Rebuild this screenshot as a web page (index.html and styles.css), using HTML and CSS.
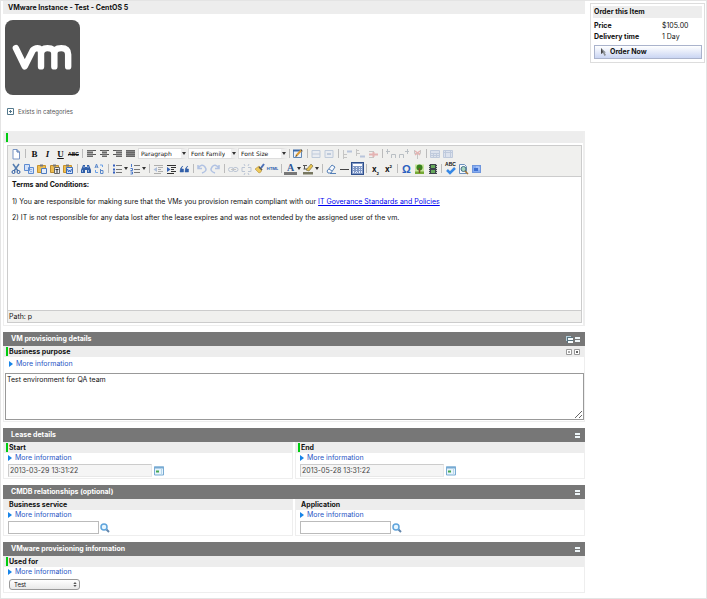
FILE: index.html
```html
<!DOCTYPE html>
<html lang="en">
<head>
<meta charset="utf-8">
<title>VMware Instance - Test - CentOS 5</title>
<link rel="stylesheet" href="styles.css">
</head>
<body>
<div class="page">
<main class="main">
  <h1 class="title">VMware Instance - Test - CentOS 5</h1>
  <svg class="logo" viewBox="0 0 76 76" role="img" aria-label="vm">
    <rect width="76" height="76" rx="8" fill="#525252"/>
    <path d="M11 28.500L20 47L28 31Q30 28.500 33 28.500Q36.500 28.500 36.500 34V47M36.500 34Q37 28.500 43 28.500Q50 28.500 50 34V47M50 34Q50 28.500 57 28.500Q64 28.500 64 35V47" fill="none" stroke="#fff" stroke-width="6.500" stroke-linecap="round" stroke-linejoin="round"/>
  </svg>
  <button class="categories" type="button">
    <svg viewBox="0 0 7 7"><path d="M.5.5h6v6h-6zM2 3.500h3M3.500 2v3" fill="none" stroke="#55798c"/></svg>
    Exists in categories
  </button>

  <section class="terms">
    <div class="label required"></div>
    <div class="editor">
      <div class="toolbar">
        <div class="tools">
          <button type="button" aria-label="New document"><svg viewBox="0 0 12 12"><path d="M3 1.500h4l2.500 2.500v7H3z" fill="#fff" stroke="#7895c4"/><path d="M7 1.500V4h2.500" fill="none" stroke="#4b70ad"/></svg></button>
          <i class="sep"></i>
          <button type="button" class="letter"><b>B</b></button>
          <button type="button" class="letter"><em>I</em></button>
          <button type="button" class="letter"><u>U</u></button>
          <button type="button" class="letter small"><s>ABC</s></button>
          <i class="sep"></i>
          <button type="button" aria-label="Align left"><svg viewBox="0 0 12 12"><path d="M2 2h9v1H2zM2 4h6v1H2zM2 6h9v1H2zM2 8h6v1H2z" fill="#555"/><path d="M2 2h6v7H2z" fill="#777" opacity=".6"/></svg></button>
          <button type="button" aria-label="Align center"><svg viewBox="0 0 12 12"><path d="M2 2h9v1H2zM4 4h5v1H4zM2 6h9v1H2zM4 8h5v1H4z" fill="#555"/><path d="M4 2h5v7H4z" fill="#777" opacity=".6"/></svg></button>
          <button type="button" aria-label="Align right"><svg viewBox="0 0 12 12"><path d="M2 2h9v1H2zM5 4h6v1H5zM2 6h9v1H2zM5 8h6v1H5z" fill="#555"/><path d="M5 2h6v7H5z" fill="#777" opacity=".6"/></svg></button>
          <button type="button" aria-label="Justify"><svg viewBox="0 0 12 12"><path d="M2 2h9v7H2z" fill="#888"/><path d="M2 2.500h9M2 4.500h9M2 6.500h9M2 8.500h9" stroke="#666"/></svg></button>
          <span class="drop"><select aria-label="Format"><option>Paragraph</option></select></span>
          <span class="drop"><select aria-label="Font family"><option>Font Family</option></select></span>
          <span class="drop"><select aria-label="Font size"><option>Font Size</option></select></span>
          <i class="sep"></i>
          <button type="button" aria-label="Edit style"><svg viewBox="0 0 12 12"><path d="M1.500 2.500h8v7h-8z" fill="#eaf1fb" stroke="#5f86b5"/><path d="M1 2.500h9" stroke="#3d6aa8" stroke-width="2"/><path d="M4 8l5.500-6" stroke="#d99a35" stroke-width="2"/><path d="M3.500 8.500l1.500-1M9 2l1.500 1" stroke="#444"/></svg></button>
          <i class="sep"></i>
          <button type="button" class="off" aria-label="Row properties"><svg viewBox="0 0 12 12"><path d="M2 2.500h8v7H2zM2 6h8" fill="#dde6f7" stroke="#6788b8"/></svg></button>
          <button type="button" class="off" aria-label="Cell properties"><svg viewBox="0 0 12 12"><path d="M2 2.500h8v7H2z" fill="#dde6f7" stroke="#6788b8"/><path d="M4 5h4v2H4z" fill="#6788b8"/></svg></button>
          <i class="sep"></i>
          <button type="button" class="off" aria-label="Insert row before"><svg viewBox="0 0 12 12"><path d="M2.500 2v9M2 6.500h4M2 9.500h4M6 3.500h5" fill="none" stroke="#777"/><path d="M6 3.500h5" stroke="#5577bb" stroke-width="2"/></svg></button>
          <button type="button" class="off" aria-label="Insert row after"><svg viewBox="0 0 12 12"><path d="M2.500 1v7M2 2.500h3M2 5.500h4M6 8.500h5" fill="none" stroke="#777"/><path d="M6 8.500h5" stroke="#5577bb" stroke-width="2"/></svg></button>
          <button type="button" class="off" aria-label="Delete row"><svg viewBox="0 0 12 12"><path d="M2 3.500h5M2 9.500h5" stroke="#777"/><path d="M2 6.500h9M6.500 4v5" stroke="#d04444" stroke-width="2"/></svg></button>
          <i class="sep"></i>
          <button type="button" class="off" aria-label="Insert column before"><svg viewBox="0 0 12 12"><path d="M2.500 1v5M1 3.500h4M6.500 10V6.500h4V10" fill="none" stroke="#567"/></svg></button>
          <button type="button" class="off" aria-label="Insert column after"><svg viewBox="0 0 12 12"><path d="M9.500 1v5M7 3.500h4M1.500 10V6.500h4V10" fill="none" stroke="#567"/></svg></button>
          <button type="button" class="off" aria-label="Delete column"><svg viewBox="0 0 12 12"><path d="M3.500 2v3.500h6V2M6.500 5v6" fill="none" stroke="#777"/><path d="M4 3l5 4M9 3L4 7" stroke="#d04444" stroke-width="1.500"/></svg></button>
          <i class="sep"></i>
          <button type="button" class="off" aria-label="Split cells"><svg viewBox="0 0 12 12"><path d="M1.500 2.500h9v7h-9z" fill="#b9cbec" stroke="#6685bd"/><path d="M1 5.500h9M1 7.500h9M4.500 5v5M7.500 5v5" stroke="#6685bd"/></svg></button>
          <button type="button" class="off" aria-label="Merge cells"><svg viewBox="0 0 12 12"><path d="M1.500 2.500h9v7h-9z" fill="#b9cbec" stroke="#6685bd"/><path d="M3.500 3v6M8.500 3v6M1 4.500h9" stroke="#6685bd"/></svg></button>
        </div>
        <div class="tools">
          <button type="button" aria-label="Cut"><svg viewBox="0 0 12 12"><path d="M3 1l5 7M9 1L4 8" stroke="#557eb0" stroke-width="1.500"/><circle cx="3.500" cy="9" r="1.500" fill="none" stroke="#2c5aa2"/><circle cx="8.500" cy="9" r="1.500" fill="none" stroke="#2c5aa2"/></svg></button>
          <button type="button" aria-label="Copy"><svg viewBox="0 0 12 12"><path d="M1.500 1.500h5v6h-5zM5.500 4.500h5v6h-5z" fill="#d3e1f8" stroke="#5d8bd0"/><path d="M7 6.500h2M7 8.500h2" stroke="#8fb0e2"/></svg></button>
          <button type="button" aria-label="Paste"><svg viewBox="0 0 12 12"><path d="M1.500 2.500h8v7h-8z" fill="#edbd50" stroke="#c7922c"/><path d="M4 1.500h3v2H4z" fill="#777"/><path d="M5.500 5.500h5v5h-5z" fill="#e3ecfb" stroke="#4f7cbe"/></svg></button>
          <button type="button" aria-label="Paste as plain text"><svg viewBox="0 0 12 12"><path d="M1.500 2.500h8v7h-8z" fill="#edbd50" stroke="#b9892f"/><path d="M4 1.500h3v2H4z" fill="#777"/><path d="M5.500 4.500h5v6h-5z" fill="#eee" stroke="#666"/><path d="M6.500 6.500h3M8 6v4" stroke="#333"/></svg></button>
          <button type="button" aria-label="Paste from Word"><svg viewBox="0 0 12 12"><path d="M1.500 2.500h8v7h-8z" fill="#edbd50" stroke="#c7922c"/><path d="M4 1.500h3v2H4z" fill="#777"/><path d="M4.500 4.500h6v6h-6z" fill="#dbe7fb" stroke="#3c6cb7"/><path d="M5.500 6l1 3 1-2 1 2 1-3" fill="none" stroke="#3366bb"/></svg></button>
          <i class="sep"></i>
          <button type="button" aria-label="Find"><svg viewBox="0 0 12 12"><path d="M3 2h2v2h2V2h2l2 5v3H7V7H5v3H1V7z" fill="#315fa8"/><path d="M2.500 7v2M8.500 7v2M4 3v2M8 3v2" stroke="#8db0e4"/></svg></button>
          <button type="button" aria-label="Replace"><svg viewBox="0 0 12 12"><path d="M2 5l1.500-4L5 5M2.500 4h2M7.500 6v4.500h2.500v-3H7.500" fill="none" stroke="#5987ca"/><path d="M7 2h2.500v2M2.500 7v2.500H5" fill="none" stroke="#6ba0e6"/></svg></button>
          <i class="sep"></i>
          <button type="button" aria-label="Bulleted list"><svg viewBox="0 0 12 12"><path d="M5 2.500h6M5 6.500h6M5 9.500h6" stroke="#777"/><path d="M2 2.500h2M2 6.500h2M2 9.500h2" stroke="#335fc0" stroke-width="2"/></svg></button><button type="button" class="arrow" aria-label="Bullet styles"></button>
          <button type="button" aria-label="Numbered list"><svg viewBox="0 0 12 12"><path d="M5 2.500h6M5 6.500h6M5 9.500h6" stroke="#777"/><path d="M2.500 1v3M1.500 5.500h2v2h-2M1.500 9h2v2h-2" fill="none" stroke="#4b78c8"/></svg></button><button type="button" class="arrow" aria-label="Number styles"></button>
          <i class="sep"></i>
          <button type="button" class="off" aria-label="Outdent"><svg viewBox="0 0 12 12"><path d="M2 2.500h9M6 4.500h5M6 6.500h3M6 8.500h5M2 10.500h7" stroke="#333"/><path d="M5 4v5L1.500 6.500z" fill="#3765b8"/></svg></button>
          <button type="button" aria-label="Indent"><svg viewBox="0 0 12 12"><path d="M2 2.500h9M6 4.500h5M6 6.500h3M6 8.500h5M2 10.500h7" stroke="#333"/><path d="M2 4v5l3.500-2.500z" fill="#3765b8"/></svg></button>
          <button type="button" aria-label="Quote"><svg viewBox="0 0 12 12"><path d="M5 3Q2 4 2 9h3.500V6H3.500Q3.500 4 5 3M10 3Q7 4 7 9h3.500V6H8.500Q8.500 4 10 3" fill="#315fa8" stroke="#315fa8" stroke-width=".5"/></svg></button>
          <i class="sep"></i>
          <button type="button" class="off" aria-label="Undo"><svg viewBox="0 0 12 12"><path d="M2 5q4-5 7-1t-3 6M2 2v3.500h4" fill="none" stroke="#3d6fd0" stroke-width="1.500"/></svg></button>
          <button type="button" class="off" aria-label="Redo"><svg viewBox="0 0 12 12"><path d="M10 5Q6 0 3 4t3 6M10 2v3.500H6" fill="none" stroke="#3d6fd0" stroke-width="1.500"/></svg></button>
          <i class="sep"></i>
          <button type="button" class="off" aria-label="Link"><svg viewBox="0 0 12 12"><rect x="1.500" y="4.500" width="5" height="4" rx="2" fill="none" stroke="#5b76a6"/><rect x="6" y="4.500" width="5" height="4" rx="2" fill="none" stroke="#5b76a6"/><path d="M4 6.500h5" stroke="#777"/></svg></button>
          <button type="button" class="off" aria-label="Unlink"><svg viewBox="0 0 12 12"><path d="M5 4.500H2v4h3M8 4.500h3v4H8M4 1l1 2M9 1L8 3M4 12l1-2M9 12l-1-2" fill="none" stroke="#5b76a6"/></svg></button>
          <button type="button" aria-label="Clean up code"><svg viewBox="0 0 12 12"><path d="M2 6l4 4 2-1 1-3-3-3z" fill="#edc95a" stroke="#a9822c" stroke-width=".5"/><path d="M6 4l3 3" stroke="#555" stroke-width="1.500"/><path d="M8 5l3-4" stroke="#4b70b8" stroke-width="2"/></svg></button>
          <button type="button" class="code">HTML</button>
          <i class="sep"></i>
          <button type="button" class="colour">A</button><button type="button" class="arrow" aria-label="Text colours"></button>
          <button type="button" aria-label="Highlight"><svg viewBox="0 0 12 12"><path d="M1 2.500h4M2.500 2v4M1.500 6h4" stroke="#555"/><path d="M4 7l5-6 2 2-4 5z" fill="#e7c34e" stroke="#55512e" stroke-width=".5"/><path d="M1 9h10v2.500H1z" fill="#777760"/></svg></button><button type="button" class="arrow" aria-label="Highlight colours"></button>
          <i class="sep"></i>
          <button type="button" aria-label="Remove formatting"><svg viewBox="0 0 12 12"><path d="M2 8l5-6 3 2-4 6H3z" fill="#f6f9fe" stroke="#547fb6"/><path d="M4 6l3 2M5 10.500h6" stroke="#547fb6"/></svg></button>
          <button type="button" aria-label="Horizontal line"><svg viewBox="0 0 12 12"><path d="M2 6.500h9" stroke="#444"/></svg></button>
          <button type="button" class="pressed" aria-label="Guidelines"><svg viewBox="0 0 11 11"><path d="M1 2h9" stroke="#fff" stroke-width="2"/><path d="M1.500 4v6M4.500 4v6M7.500 4v6M9.500 4v6M1 9.500h9" fill="none" stroke="#e1eafa" stroke-dasharray="1 1"/></svg></button>
          <i class="sep"></i>
          <button type="button" class="script">x<sub>2</sub></button>
          <button type="button" class="script">x<sup>2</sup></button>
          <i class="sep"></i>
          <button type="button" class="omega">&Omega;</button>
          <button type="button" aria-label="Image"><svg viewBox="0 0 12 12"><path d="M2 1.500h9v9H2z" fill="#c8e69b"/><path d="M2 8.500h9V11H2z" fill="#76aa35"/><circle cx="6.500" cy="4.500" r="3" fill="#39821e"/><path d="M6.500 5v5" stroke="#79512b" stroke-width="1.500"/></svg></button>
          <button type="button" aria-label="Media"><svg viewBox="0 0 12 12"><path d="M3 1h8v10H3z" fill="#3b4249"/><path d="M5 2h4v3H5zM5 7h4v3H5z" fill="#66a85b"/><path d="M3.500 1v10M10.500 1v10" stroke="#ccc" stroke-dasharray="1 1"/></svg></button>
          <i class="sep"></i>
          <button type="button" class="spell"><span>ABC</span><svg viewBox="0 0 12 8"><path d="M3 3l3 3 5-5" fill="none" stroke="#3688e5" stroke-width="2.500"/></svg></button>
          <button type="button" aria-label="Preview"><svg viewBox="0 0 12 12"><path d="M2.500 1.500h5l2 2v7h-7z" fill="#f4f8ff" stroke="#6e91bd"/><circle cx="6.500" cy="6" r="2.500" fill="#a9d6be" stroke="#416e83"/><path d="M8 8l3 3" stroke="#a67635" stroke-width="1.500"/></svg></button>
          <button type="button" aria-label="Full screen"><svg viewBox="0 0 12 12"><rect x="2.500" y="2.500" width="8" height="7" fill="#86acf0" stroke="#6f96dd"/><path d="M4 5h4v3H4z" fill="#3e70d0"/><path d="M6 4h3v3" fill="none" stroke="#b9cffa"/></svg></button>
        </div>
      </div>
      <div class="content">
        <p><b>Terms and Conditions:</b></p>
        <p>1) You are responsible for making sure that the VMs you provision remain compliant with our <a href="#">IT Goverance Standards and Policies</a></p>
        <p>2) IT is not responsible for any data lost after the lease expires and was not extended by the assigned user of the vm.</p>
      </div>
      <div class="status">Path: p</div>
    </div>
  </section>

  <section class="group">
    <h2>VM provisioning details
      <span class="marks">
        <button type="button" aria-label="Collapse all"><svg viewBox="0 0 7 7"><path d="M0 0h5v5H0z" fill="#b6d0db"/><path d="M1 1h6v6H1z" fill="#58727e"/><path d="M2 2h5v2H2zM2 5h5v2H2z" fill="#f7fbfc"/></svg></button>
        <button type="button" aria-label="Collapse"><svg viewBox="0 0 7 7"><path d="M1 1h5v2H1zM1 4h5v2H1z" fill="#edf5f8"/></svg></button>
      </span>
    </h2>
    <div class="cell">
      <div class="label required"><label for="purpose">Business purpose</label>
        <span class="marks">
          <button type="button" aria-label="Smaller"><svg viewBox="0 0 7 7"><path d="M1.500 1.500h5v5h-5z" fill="#fff" stroke="#999"/><path d="M3 4h2" stroke="#555"/></svg></button>
          <button type="button" aria-label="Larger"><svg viewBox="0 0 7 7"><path d="M1.500 1.500h5v5h-5z" fill="#fff" stroke="#999"/><path d="M3 4h2M4 3v2" stroke="#333"/></svg></button>
        </span>
      </div>
      <a class="more tall" href="#">More information</a>
      <textarea id="purpose">Test environment for QA team</textarea>
    </div>
  </section>

  <section class="group">
    <h2>Lease details
      <span class="marks"><button type="button" aria-label="Collapse"><svg viewBox="0 0 7 7"><path d="M1 1h5v2H1zM1 4h5v2H1z" fill="#edf5f8"/></svg></button></span>
    </h2>
    <div class="pair">
      <div class="cell">
        <div class="label required"><label for="start">Start</label></div>
        <a class="more" href="#">More information</a>
        <div class="field"><input class="date" id="start" value="2013-03-29 13:31:22" readonly>
          <button type="button" aria-label="Choose start"><svg viewBox="0 0 10 9"><path d="M.5.5h9v8h-9z" fill="#e7f4fc" stroke="#78abd3"/><path d="M0 1h10" stroke="#78abd3" stroke-width="2"/><path d="M7.500 2v6" stroke="#b7d6ec"/><path d="M2 4h3v2H2z" fill="#47a750"/></svg></button></div>
      </div>
      <div class="cell">
        <div class="label required"><label for="end">End</label></div>
        <a class="more" href="#">More information</a>
        <div class="field"><input class="date" id="end" value="2013-05-28 13:31:22" readonly>
          <button type="button" aria-label="Choose end"><svg viewBox="0 0 10 9"><path d="M.5.5h9v8h-9z" fill="#e7f4fc" stroke="#78abd3"/><path d="M0 1h10" stroke="#78abd3" stroke-width="2"/><path d="M7.500 2v6" stroke="#b7d6ec"/><path d="M2 4h3v2H2z" fill="#47a750"/></svg></button></div>
      </div>
    </div>
  </section>

  <section class="group">
    <h2>CMDB relationships (optional)
      <span class="marks"><button type="button" aria-label="Collapse"><svg viewBox="0 0 7 7"><path d="M1 1h5v2H1zM1 4h5v2H1z" fill="#edf5f8"/></svg></button></span>
    </h2>
    <div class="pair">
      <div class="cell">
        <div class="label"><label for="service">Business service</label></div>
        <a class="more" href="#">More information</a>
        <div class="field"><input class="lookup" id="service">
          <button type="button" aria-label="Find service"><svg viewBox="0 0 10 10"><path d="M6.500 6.500L9 9" stroke="#6386ac" stroke-width="2"/><circle cx="4" cy="4" r="3" fill="#e7f6ff" stroke="#5fa4dc" stroke-width="1.500"/></svg></button></div>
      </div>
      <div class="cell">
        <div class="label"><label for="application">Application</label></div>
        <a class="more" href="#">More information</a>
        <div class="field"><input class="lookup" id="application">
          <button type="button" aria-label="Find application"><svg viewBox="0 0 10 10"><path d="M6.500 6.500L9 9" stroke="#6386ac" stroke-width="2"/><circle cx="4" cy="4" r="3" fill="#e7f6ff" stroke="#5fa4dc" stroke-width="1.500"/></svg></button></div>
      </div>
    </div>
  </section>

  <section class="group">
    <h2>VMware provisioning information
      <span class="marks"><button type="button" aria-label="Collapse"><svg viewBox="0 0 7 7"><path d="M1 1h5v2H1zM1 4h5v2H1z" fill="#edf5f8"/></svg></button></span>
    </h2>
    <div class="cell">
      <div class="label required"><label for="used">Used for</label></div>
      <a class="more" href="#">More information</a>
      <div class="field"><span class="used"><select id="used"><option>Test</option></select><svg viewBox="0 0 4 6"><path d="M0 2.500L2 0l2 2.500zM0 3.500L2 6l2-2.500z" fill="#555"/></svg></span></div>
    </div>
  </section>
</main>

<aside class="order">
  <h2>Order this Item</h2>
  <table>
    <tr><th scope="row">Price</th><td>$105.00</td></tr>
    <tr><th scope="row">Delivery time</th><td>1 Day</td></tr>
  </table>
  <button type="button"><svg viewBox="0 0 7 8"><path d="M1 0v6l2-1 1.500 3L6 7 4.500 4.500H6z" fill="#8a8f94"/><path d="M1 0v6l2-2" fill="#444"/></svg>Order Now</button>
</aside>
</div>
</body>
</html>
```

FILE: styles.css
```css
* { box-sizing: border-box; }
body {
  margin: 0;
  background: #fff;
  color: #111;
  font: 7px/10px Inter, "Liberation Sans", sans-serif;
}
h1, h2, p { margin: 0; font-size: inherit; }
button, input, select, textarea { font: inherit; color: inherit; }
button { padding: 0; border: 0; background: none; }
svg { display: block; }

.page {
  display: flex;
  align-items: flex-start;
  gap: 5px;
  min-height: 599px;
  padding: 0 1px 0 2px;
  border: 1px solid #e4e4e4;
}
.main { flex: 1; min-width: 0; }
.title {
  height: 13px;
  padding: 0 5px;
  background: #ededed;
  line-height: 13px;
}
.logo { width: 75px; height: 75px; margin: 6px 0 0 2px; }
.categories {
  display: flex;
  align-items: center;
  gap: 4px;
  margin: 11px 0 14px 4px;
  color: #555;
  font-size: 6px;
  line-height: 11px;
}
.categories svg { width: 7px; height: 7px; }

/* Field labels */
.label {
  display: flex;
  align-items: center;
  height: 11px;
  padding-right: 4px;
  background: #ededed;
  font-weight: bold;
  line-height: 11px;
}
.label::before {
  content: "";
  width: 2px;
  height: 9px;
  margin: 0 1px 0 2px;
}
.label.required::before { background: #0c1; }
.marks { display: flex; gap: 1px; margin-left: auto; }
.marks svg { width: 7px; height: 7px; }
h2 .marks { padding-top: 1px; }

/* Rich text editor */
.terms { border: 1px solid #eee; border-right-width: 2px; padding-bottom: 2px; }
.editor { margin: 2px 1px 0 3px; border: 1px solid #ccc; }
.toolbar {
  padding: 0 2px;
  border-bottom: 1px solid #ccc;
  background: #f0f0ee;
}
.tools { display: flex; align-items: center; height: 15px; }
.tools button { flex: none; width: 13px; height: 13px; }
.tools svg { width: 12px; height: 12px; }
.tools .off svg { opacity: .35; }
.sep { flex: none; width: 1px; height: 9px; margin: 0 2px; background: #bbb; }
.tools .letter { font: 9px/12px "Liberation Serif", serif; font-weight: bold; }
.tools .small { font-family: "Liberation Sans", sans-serif; font-size: 5px; }
.tools .arrow { position: relative; width: 5px; }
.tools .arrow::after, .drop::after {
  content: "";
  position: absolute;
  top: 5px;
  right: 1px;
  border: 2px solid transparent;
  border-top: 3px solid #333;
  border-bottom: 0;
}
.drop { position: relative; flex: none; width: 49px; height: 11px; margin-left: 1px; }
.drop select {
  display: block;
  width: 100%;
  height: 100%;
  padding: 0 6px 0 2px;
  border: 1px solid #ddd;
  border-right: 6px solid #eee;
  background: #fff;
  appearance: none;
  font: 6px/9px "DejaVu Sans", sans-serif;
}
.drop::after { top: 4px; }
.tools .code { color: #2861ad; font-size: 4px; font-weight: bold; }
.tools .colour {
  height: 12px;
  border-bottom: 3px solid #777;
  color: #2b5797;
  font: bold 10px/9px "Liberation Serif", serif;
}
.tools .pressed { border: 1px solid #2e4f8c; background: #8199c6; }
.tools .pressed svg { width: 11px; height: 11px; }
.tools .script { font-size: 8px; font-weight: bold; }
.script sub, .script sup { font-size: 4px; line-height: 1px; }
.tools .omega { color: #2b61c0; font: bold 11px/12px "Liberation Sans", sans-serif; }
.spell span { display: block; font: bold 5px/5px "Liberation Sans", sans-serif; }
.tools .spell svg { height: 8px; }
.content { min-height: 133px; padding: 3px 4px; }
.content p { margin-bottom: 7px; }
.content p + p { margin-bottom: 6px; }
.content a { color: #00e; }
.status {
  height: 12px;
  padding: 0 1px;
  border-top: 1px solid #ccc;
  background: #f0f0ee;
  line-height: 11px;
}

/* Form groups */
.group { margin-top: 6px; }
.group h2 {
  display: flex;
  align-items: center;
  height: 14px;
  padding: 0 4px 0 8px;
  background: #777;
  color: #fff;
  line-height: 14px;
}
.cell { border: 1px solid #eee; border-top: 0; }
.pair { display: grid; grid-template-columns: 1fr 1fr; gap: 2px; }
.more {
  display: flex;
  align-items: center;
  gap: 3px;
  width: max-content;
  height: 10px;
  margin-left: 4px;
  color: #2855c5;
  text-decoration: none;
}
.more::before {
  content: "";
  border: 3px solid transparent;
  border-left: 4px solid #1784e8;
  border-right: 0;
}
.more.tall { height: 12px; margin: 1px 0 3px 5px; }
.cell textarea {
  display: block;
  width: calc(100% - 1px);
  height: 47px;
  margin: 0 0 1px 1px;
  padding: 1px;
  border: 1px solid #999;
  background: #fff;
}
.field { display: flex; align-items: center; gap: 1px; height: 15px; padding-left: 4px; }
.field input { height: 13px; padding: 0 1px; border: 1px solid #bbb; }
.field .date {
  width: 144px;
  margin-right: 1px;
  border-color: #ccc #e8e8e8 #e8e8e8 #ccc;
  background: #f5f5f5;
  color: #444;
}
.field .lookup { width: 91px; background: #fff; }
.field button svg { width: 10px; height: 10px; }
.used { position: relative; margin-left: 1px; }
.used select {
  display: block;
  width: 71px;
  height: 11px;
  padding: 0 4px;
  border: 1px solid #999;
  border-radius: 3px;
  background: linear-gradient(#fff, #e8e8e8);
  appearance: none;
  font-size: 6px;
  line-height: 9px;
}
.used svg { position: absolute; top: 3px; right: 3px; width: 4px; height: 5px; }

/* Order panel */
.order {
  flex: none;
  width: 115px;
  margin-top: 2px;
  padding: 2px 2px 3px;
  border: 1px solid #ddd;
}
.order h2 { height: 12px; margin-bottom: 2px; padding: 0 1px; background: #ededed; line-height: 12px; }
.order table { width: 100%; border-collapse: collapse; }
.order th, .order td { height: 11px; padding: 0; line-height: 11px; text-align: left; }
.order th { width: 69px; padding-left: 1px; }
.order > button {
  display: flex;
  align-items: center;
  gap: 3px;
  width: 108px;
  height: 14px;
  margin: 3px 0 0 1px;
  padding-left: 5px;
  border: 1px solid #aab3cc;
  background: linear-gradient(#fff, #cad5f3);
  font-weight: bold;
}
.order > button svg { width: 7px; height: 8px; }
```
